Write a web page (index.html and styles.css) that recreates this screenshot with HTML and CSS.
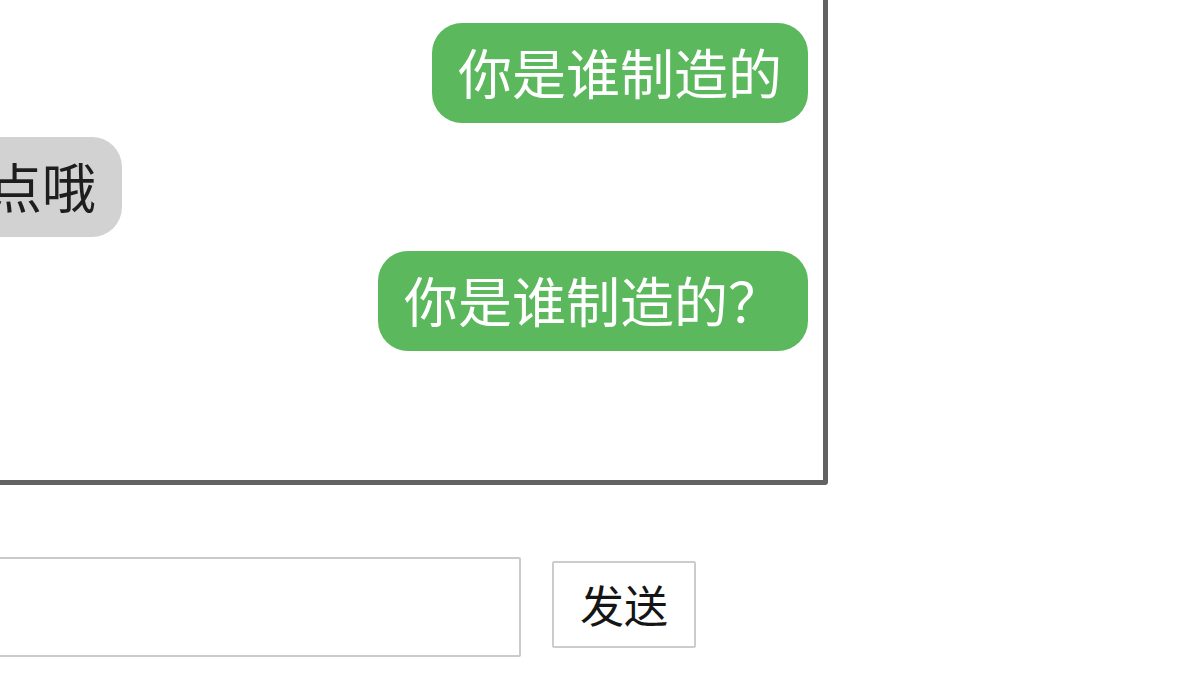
FILE: index.html
```html
<!DOCTYPE html>
<html lang="zh-CN">
<head>
<meta charset="utf-8">
<title>聊天</title>
<link rel="stylesheet" href="styles.css">
</head>
<body>
<div class="page">
  <div class="chat-box">
    <div class="msg msg-user">你是谁制造的</div>
    <div class="msg msg-bot">请你说得清楚一点哦</div>
    <div class="msg msg-user">你是谁制造的？</div>
  </div>
  <div class="input-row">
    <input class="chat-input" type="text">
    <button class="send-btn" type="button">发送</button>
  </div>
</div>
</body>
</html>
```
FILE: styles.css
```css
html, body {
  margin: 0;
  padding: 0;
  background: #ffffff;
  overflow: hidden;
}

body {
  font-family: "Noto Sans CJK SC", "Noto Sans", sans-serif;
  width: 1200px;
  height: 675px;
}

.page {
  margin-left: -436px;
  margin-top: -115px;
  display: flex;
  flex-direction: column;
}

.chat-box {
  box-sizing: border-box;
  width: 1264px;
  height: 600px;
  border: 5px solid #626262;
  border-radius: 3px;
  padding: 0 15px 129px 15px;
  display: flex;
  flex-direction: column;
  justify-content: flex-end;
  gap: 14px;
  overflow: hidden;
  flex-shrink: 0;
}

.msg {
  box-sizing: border-box;
  height: 100px;
  padding: 0 26px 0 26px;
  font-size: 54px;
  line-height: 98px;
  border-radius: 30px;
  white-space: nowrap;
}

.msg-user {
  align-self: flex-end;
  background: #5cb85c;
  color: #ffffff;
}

.msg-bot {
  align-self: flex-start;
  background: #d2d2d2;
  color: #1e1e1e;
}

.input-row {
  display: flex;
  align-items: center;
  gap: 31px;
  margin-top: 72px;
}

.chat-input {
  box-sizing: border-box;
  width: 957px;
  height: 100px;
  border: 2px solid #cacaca;
  border-radius: 2px;
  background: #ffffff;
  font-size: 40px;
  padding: 0 12px;
  outline: none;
}

.send-btn {
  box-sizing: border-box;
  width: 144px;
  height: 87px;
  margin-top: -6px;
  border: 2px solid #cccccc;
  border-radius: 2px;
  background: #ffffff;
  color: #151515;
  font-family: "Noto Sans CJK SC", sans-serif;
  font-size: 44px;
  padding: 0;
}
```
